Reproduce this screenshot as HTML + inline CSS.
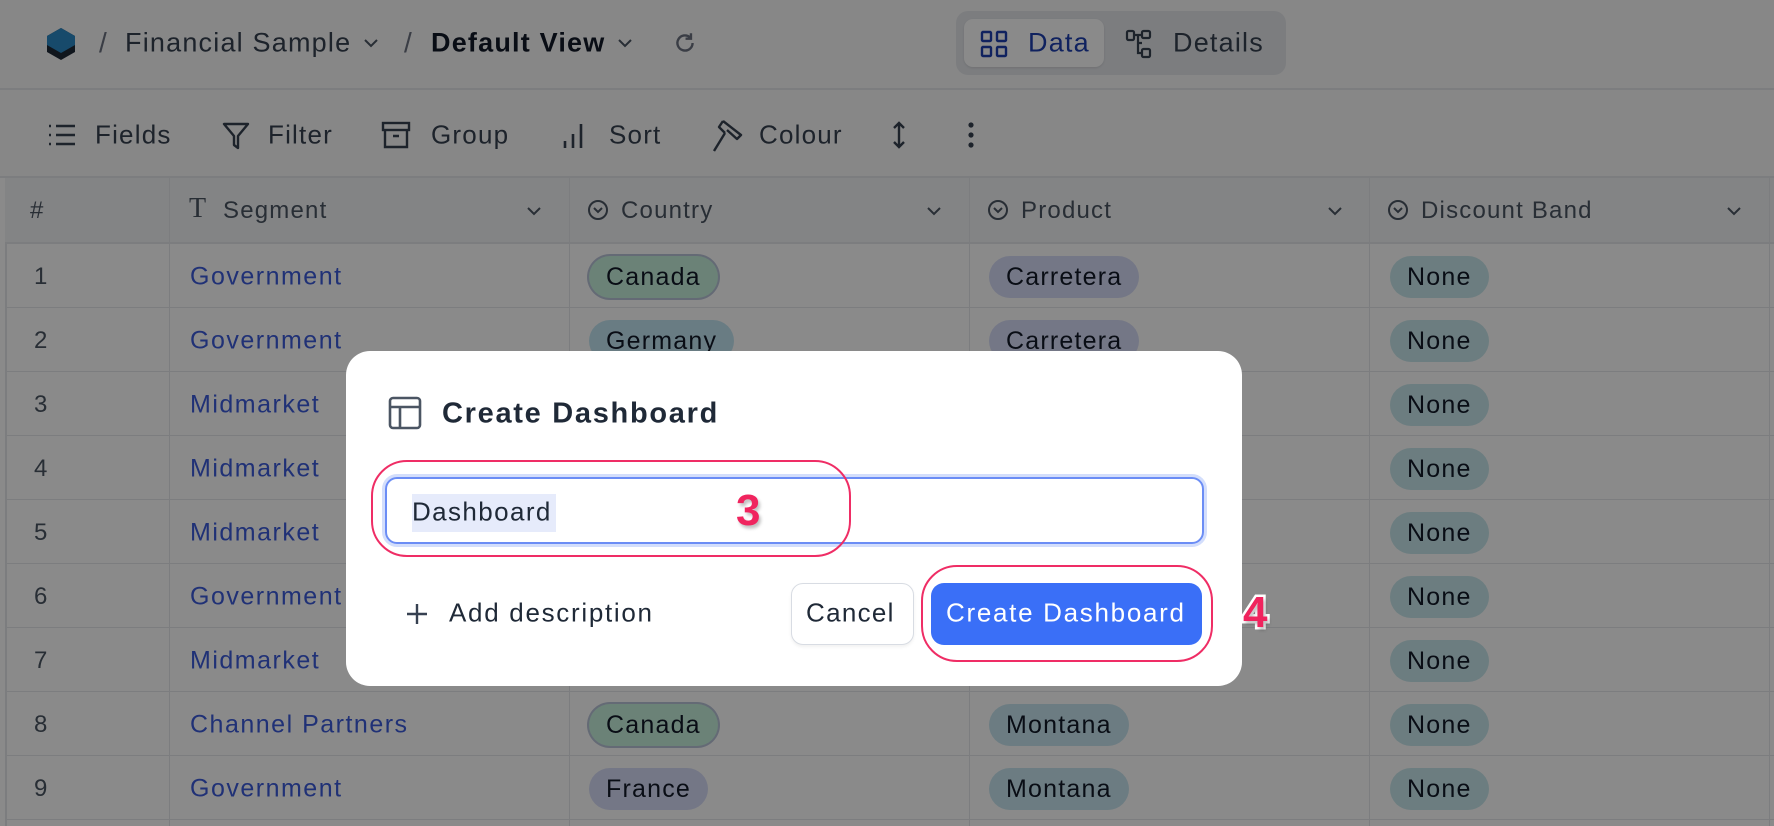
<!DOCTYPE html>
<html><head><meta charset="utf-8"><style>
*{margin:0;padding:0;box-sizing:border-box}
body{width:1774px;height:826px;overflow:hidden;background:#fff;font-family:"Liberation Sans",sans-serif;color:#1f2937;position:relative;letter-spacing:1.2px}
.a{position:absolute;white-space:nowrap}
.vc{transform:translateY(-50%)}
.hdr{left:0;top:0;width:1774px;height:90px;background:#fafafa;border-bottom:2px solid #e5e7eb}
.tb{left:0;top:90px;width:1774px;height:88px;background:#fafafa;border-bottom:2px solid #e5e7eb}
.t{font-size:26px;color:#374151}
.th{left:5px;top:178px;width:1769px;height:66px;background:#f3f4f6;border-bottom:2px solid #e5e7eb}
.row{left:5px;width:1769px;height:64px;border-bottom:1px solid #e5e7eb}
.vl{top:178px;width:1px;height:648px;background:#e5e7eb}
.pill{position:absolute;height:42px;line-height:42px;padding:0 17px;border-radius:21px;font-size:25px;color:#111827;transform:translateY(-50%)}
.seg{font-size:25px;color:#3b5bdb;letter-spacing:1.5px}
.num{font-size:24px;color:#4b5563}
.hd{font-size:24px;color:#4b5563}
.m{letter-spacing:1.7px}
.big{font-size:44px;font-weight:bold;color:#f0245e;-webkit-text-stroke:5px #fff;paint-order:stroke fill;text-shadow:2px 3px 3px rgba(0,0,0,.25);letter-spacing:0}
svg{position:absolute}
.ov{left:0;top:0;width:1774px;height:826px;background:rgba(0,0,0,.46)}
</style></head><body>
<div class="a" style="left:5px;top:0;width:2px;height:826px;background:#e5e7eb"></div>
<div class="a hdr"></div>
<svg style="left:45px;top:27px" width="32" height="34" viewBox="0 0 32 34"><path d="M16 1 L30 9 L30 25 L16 33 L2 25 L2 9Z" fill="#1f2937"/><path d="M16 1 L30 9 L30 18 L16 26 L2 18 L2 9Z" fill="#2b8ac6"/></svg>
<div class="a t vc" style="left:99px;top:43px;color:#6b7280;font-size:28px">/</div>
<div class="a t vc" style="left:125px;top:43px;font-size:27px">Financial Sample</div>
<svg style="left:362px;top:36px" width="18" height="14" viewBox="0 0 18 14"><path d="M3 4l6 6 6-6" fill="none" stroke="#4b5563" stroke-width="2"/></svg>
<div class="a t vc" style="left:404px;top:43px;color:#6b7280;font-size:28px">/</div>
<div class="a t vc" style="left:431px;top:43px;font-size:27px;font-weight:bold;color:#111827">Default View</div>
<svg style="left:616px;top:36px" width="18" height="14" viewBox="0 0 18 14"><path d="M3 4l6 6 6-6" fill="none" stroke="#4b5563" stroke-width="2"/></svg>
<svg style="left:672px;top:30px" width="26" height="26" viewBox="0 0 24 24"><path d="M19 12a7 7 0 1 1-2.1-5" fill="none" stroke="#6b7280" stroke-width="2.2"/><path d="M17.5 3v5h-5" fill="none" stroke="#6b7280" stroke-width="2.2"/></svg>
<div class="a" style="left:956px;top:11px;width:330px;height:64px;background:#e5e7eb;border-radius:12px"></div>
<div class="a" style="left:964px;top:19px;width:140px;height:48px;background:#fff;border-radius:9px;box-shadow:0 1px 2px rgba(0,0,0,.1)"></div>
<svg style="left:980px;top:30px" width="28" height="28" viewBox="0 0 28 28" fill="none" stroke="#1e40af" stroke-width="2.4"><rect x="2" y="2" width="9" height="9" rx="1"/><rect x="17" y="2" width="9" height="9" rx="1"/><rect x="2" y="17" width="9" height="9" rx="1"/><rect x="17" y="17" width="9" height="9" rx="1"/></svg>
<div class="a vc" style="left:1028px;top:43px;font-size:27px;color:#1e40af">Data</div>
<svg style="left:1125px;top:29px" width="28" height="30" viewBox="0 0 28 30" fill="none" stroke="#374151" stroke-width="2.2"><rect x="2" y="2" width="7" height="9" rx="1.5"/><rect x="17" y="2" width="8" height="7" rx="1.5"/><rect x="17" y="20" width="8" height="8" rx="1.5"/><path d="M9 6h8M13 6v18h4M13 14h4"/></svg>
<div class="a vc" style="left:1173px;top:43px;font-size:27px;color:#374151">Details</div>

<div class="a tb"></div>
<svg style="left:47px;top:123px" width="30" height="24" viewBox="0 0 30 24" stroke="#374151" stroke-width="2.4"><path d="M2 3h2M2 12h2M2 21h2M9 3h19M9 12h19M9 21h19"/></svg>
<div class="a t vc" style="left:95px;top:135px">Fields</div>
<svg style="left:221px;top:121px" width="30" height="30" viewBox="0 0 30 30" fill="none" stroke="#374151" stroke-width="2.4" stroke-linejoin="round"><path d="M3 3h24L17 15v12l-4-3V15Z"/></svg>
<div class="a t vc" style="left:268px;top:135px">Filter</div>
<svg style="left:381px;top:120px" width="30" height="30" viewBox="0 0 30 30" fill="none" stroke="#374151" stroke-width="2.4"><rect x="2" y="3" width="26" height="7"/><path d="M4 10v17h22V10M12 16h6"/></svg>
<div class="a t vc" style="left:431px;top:135px">Group</div>
<svg style="left:562px;top:121px" width="24" height="28" viewBox="0 0 24 28" stroke="#374151" stroke-width="2.6"><path d="M3 20v7M11 13v14M19 3v24"/></svg>
<div class="a t vc" style="left:609px;top:135px">Sort</div>
<svg style="left:711px;top:118px" width="32" height="36" viewBox="0 0 32 36" fill="none" stroke="#374151" stroke-width="2.4" stroke-linejoin="round"><path d="M12 3l18 14-4 4-10-9M12 3l-4 6 6 6M14 15L3 33"/></svg>
<div class="a t vc" style="left:759px;top:135px">Colour</div>
<svg style="left:891px;top:120px" width="16" height="30" viewBox="0 0 16 30" fill="none" stroke="#374151" stroke-width="2.4"><path d="M8 3v24M3 8l5-5 5 5M3 22l5 5 5-5"/></svg>
<svg style="left:965px;top:122px" width="12" height="26" viewBox="0 0 12 26" fill="#374151"><circle cx="6" cy="3" r="2.6"/><circle cx="6" cy="13" r="2.6"/><circle cx="6" cy="23" r="2.6"/></svg>

<div class="a th"></div>
<div class="a hd vc" style="left:30px;top:211px">#</div>
<div class="a hd vc" style="left:189px;top:209px;font-size:28px;font-family:'Liberation Serif',serif">T</div>
<div class="a hd vc" style="left:223px;top:211px">Segment</div>
<div class="a hd vc" style="left:621px;top:211px">Country</div>
<div class="a hd vc" style="left:1021px;top:211px">Product</div>
<div class="a hd vc" style="left:1421px;top:211px">Discount Band</div>
<svg style="left:587px;top:199px" width="22" height="22" viewBox="0 0 22 22" fill="none" stroke="#4b5563" stroke-width="2"><circle cx="11" cy="11" r="9"/><path d="M7 9l4 4 4-4"/></svg>
<svg style="left:987px;top:199px" width="22" height="22" viewBox="0 0 22 22" fill="none" stroke="#4b5563" stroke-width="2"><circle cx="11" cy="11" r="9"/><path d="M7 9l4 4 4-4"/></svg>
<svg style="left:1387px;top:199px" width="22" height="22" viewBox="0 0 22 22" fill="none" stroke="#4b5563" stroke-width="2"><circle cx="11" cy="11" r="9"/><path d="M7 9l4 4 4-4"/></svg>
<svg style="left:525px;top:204px" width="18" height="14" viewBox="0 0 18 14"><path d="M3 4l6 6 6-6" fill="none" stroke="#4b5563" stroke-width="2"/></svg>
<svg style="left:925px;top:204px" width="18" height="14" viewBox="0 0 18 14"><path d="M3 4l6 6 6-6" fill="none" stroke="#4b5563" stroke-width="2"/></svg>
<svg style="left:1326px;top:204px" width="18" height="14" viewBox="0 0 18 14"><path d="M3 4l6 6 6-6" fill="none" stroke="#4b5563" stroke-width="2"/></svg>
<svg style="left:1725px;top:204px" width="18" height="14" viewBox="0 0 18 14"><path d="M3 4l6 6 6-6" fill="none" stroke="#4b5563" stroke-width="2"/></svg>

<div class="a row" style="top:244px"></div><div class="a row" style="top:308px"></div><div class="a row" style="top:372px"></div>
<div class="a row" style="top:436px"></div><div class="a row" style="top:500px"></div><div class="a row" style="top:564px"></div>
<div class="a row" style="top:628px"></div><div class="a row" style="top:692px"></div><div class="a row" style="top:756px"></div>
<div class="a vl" style="left:169px"></div><div class="a vl" style="left:569px"></div><div class="a vl" style="left:969px"></div><div class="a vl" style="left:1369px"></div><div class="a vl" style="left:1769px"></div>

<div class="a num vc" style="left:34px;top:277px">1</div><div class="a seg vc" style="left:190px;top:277px">Government</div>
<div class="a num vc" style="left:34px;top:341px">2</div><div class="a seg vc" style="left:190px;top:341px">Government</div>
<div class="a num vc" style="left:34px;top:405px">3</div><div class="a seg vc" style="left:190px;top:405px">Midmarket</div>
<div class="a num vc" style="left:34px;top:469px">4</div><div class="a seg vc" style="left:190px;top:469px">Midmarket</div>
<div class="a num vc" style="left:34px;top:533px">5</div><div class="a seg vc" style="left:190px;top:533px">Midmarket</div>
<div class="a num vc" style="left:34px;top:597px">6</div><div class="a seg vc" style="left:190px;top:597px">Government</div>
<div class="a num vc" style="left:34px;top:661px">7</div><div class="a seg vc" style="left:190px;top:661px">Midmarket</div>
<div class="a num vc" style="left:34px;top:725px">8</div><div class="a seg vc" style="left:190px;top:725px">Channel Partners</div>
<div class="a num vc" style="left:34px;top:789px">9</div><div class="a seg vc" style="left:190px;top:789px">Government</div>

<div class="pill" style="left:589px;top:277px;background:#c6f0dc;box-shadow:0 0 0 2px #b9c5d8">Canada</div>
<div class="pill" style="left:589px;top:341px;background:#c3e6f2">Germany</div>
<div class="pill" style="left:589px;top:725px;background:#c6f0dc;box-shadow:0 0 0 2px #b9c5d8">Canada</div>
<div class="pill" style="left:589px;top:789px;background:#d7dcf7">France</div>
<div class="pill" style="left:989px;top:277px;background:#d7dcf7">Carretera</div>
<div class="pill" style="left:989px;top:341px;background:#d7dcf7">Carretera</div>
<div class="pill" style="left:989px;top:725px;background:#c8e6f0">Montana</div>
<div class="pill" style="left:989px;top:789px;background:#c8e6f0">Montana</div>
<div class="pill" style="left:1390px;top:277px;background:#c7e7ec">None</div>
<div class="pill" style="left:1390px;top:341px;background:#c7e7ec">None</div>
<div class="pill" style="left:1390px;top:405px;background:#c7e7ec">None</div>
<div class="pill" style="left:1390px;top:469px;background:#c7e7ec">None</div>
<div class="pill" style="left:1390px;top:533px;background:#c7e7ec">None</div>
<div class="pill" style="left:1390px;top:597px;background:#c7e7ec">None</div>
<div class="pill" style="left:1390px;top:661px;background:#c7e7ec">None</div>
<div class="pill" style="left:1390px;top:725px;background:#c7e7ec">None</div>
<div class="pill" style="left:1390px;top:789px;background:#c7e7ec">None</div>

<div class="a ov"></div>

<div class="a" style="left:346px;top:351px;width:896px;height:335px;background:#fff;border-radius:24px"></div>
<svg style="left:388px;top:396px" width="34" height="34" viewBox="0 0 34 34" fill="none" stroke="#4b5563" stroke-width="2.6"><rect x="2" y="2" width="30" height="30" rx="3"/><path d="M2 11h30M12 11v21"/></svg>
<div class="a vc m" style="left:442px;top:414px;font-size:29px;font-weight:bold;color:#1f2937">Create Dashboard</div>
<div class="a" style="left:385px;top:477px;width:819px;height:67px;border:2px solid #6b8df5;border-radius:12px;box-shadow:0 0 0 3px #d3defc"></div>
<div class="a" style="left:412px;top:494px;width:144px;height:38px;background:#e6ebfb"></div>
<div class="a vc m" style="left:412px;top:512px;font-size:26px;color:#1f2937;letter-spacing:1.4px">Dashboard</div>
<div class="a" style="left:371px;top:460px;width:480px;height:97px;border:2px solid #ef2d65;border-radius:36px"></div>
<div class="a vc big" style="left:736px;top:511px">3</div>
<svg style="left:405px;top:602px" width="24" height="24" viewBox="0 0 24 24" stroke="#374151" stroke-width="2.4"><path d="M12 2v20M2 12h20"/></svg>
<div class="a vc m" style="left:449px;top:613px;font-size:26px;color:#1f2937">Add description</div>
<div class="a" style="left:791px;top:583px;width:123px;height:62px;border:1px solid #d8dce3;border-radius:12px;background:#fff;box-shadow:0 2px 3px rgba(0,0,0,.06)"></div>
<div class="a vc" style="left:806px;top:613px;font-size:26px;color:#1f2937;letter-spacing:1.3px">Cancel</div>
<div class="a" style="left:931px;top:583px;width:271px;height:62px;background:#3a6ff7;border-radius:13px"></div>
<div class="a vc m" style="left:946px;top:613px;font-size:26px;color:#fff">Create Dashboard</div>
<div class="a" style="left:921px;top:565px;width:292px;height:97px;border:2px solid #ef2d65;border-radius:36px"></div>
<div class="a vc big" style="left:1243px;top:613px">4</div>
</body></html>
